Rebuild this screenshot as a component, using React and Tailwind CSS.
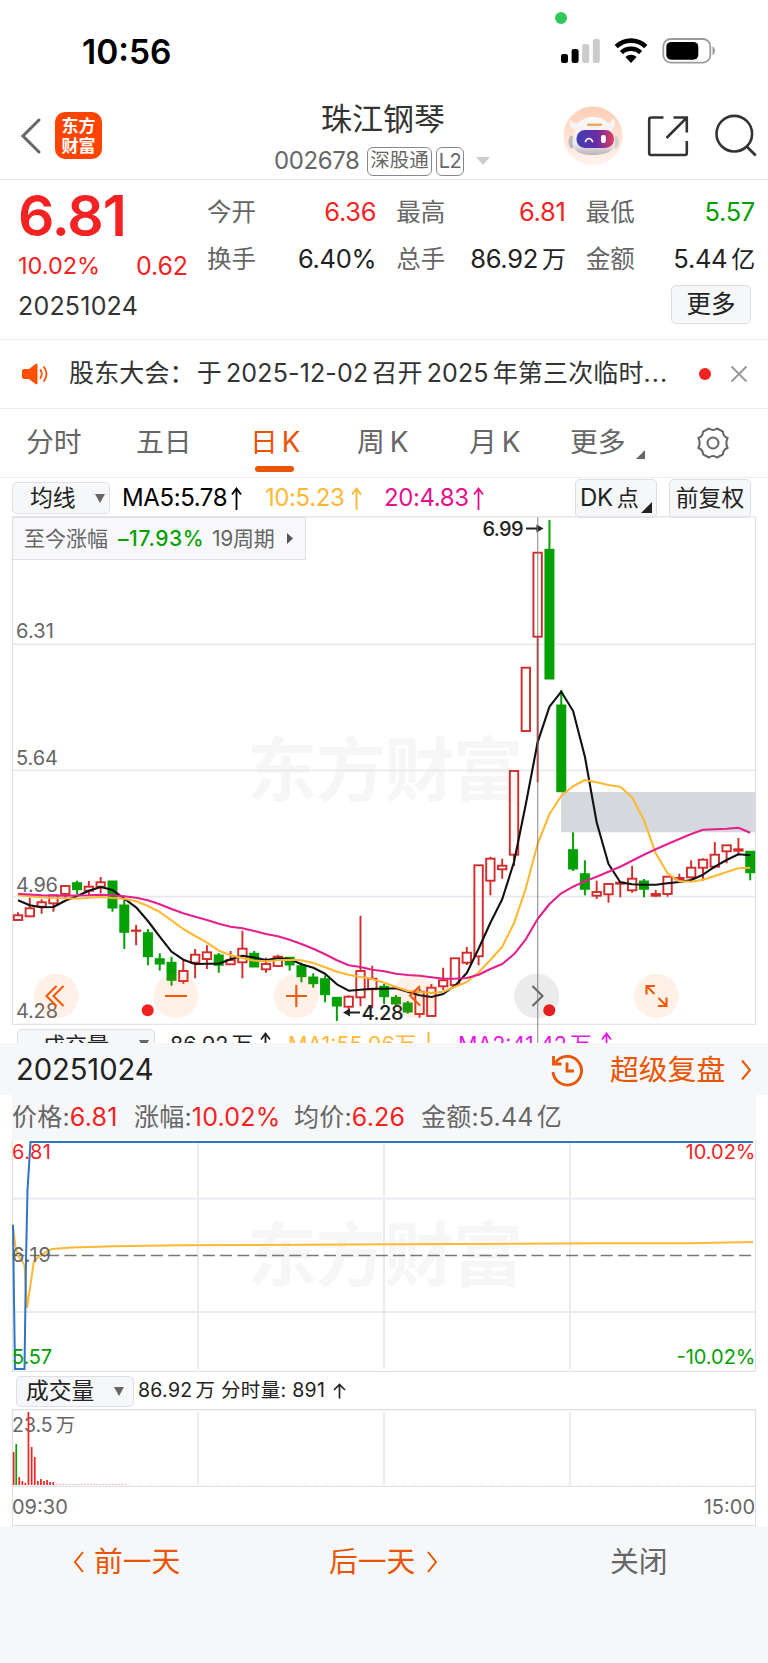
import React from "react";

const RED = "#f42222";
const GREEN = "#04a004";
const STEP = 11.81;

// [direction, body top, body bottom, high, low]
const CANDLES = [
  ["u", 915.3, 920, 912.3, 920.7], ["u", 908.3, 916.3, 897.7, 917.3], ["u", 902.3, 906.7, 899.3, 913.7],
  ["u", 895.3, 903.3, 895.3, 911.7], ["u", 886, 894, 885.3, 898], ["d", 882.7, 889.7, 880.7, 894.3],
  ["u", 886.7, 890.7, 881, 895.3], ["u", 882.3, 886.7, 877, 893.3], ["d", 881, 908, 881, 911.7],
  ["d", 905, 932.3, 899, 949], ["u", 930.5, 930.9, 925, 945.3], ["d", 932.7, 956.7, 929, 965.3],
  ["d", 958.7, 964, 953.3, 970.7], ["d", 962.3, 980.3, 956.7, 985.7], ["u", 971, 981, 960, 983.7],
  ["u", 954.7, 962.7, 949, 978.3], ["u", 952.3, 959, 945.3, 969], ["d", 955, 965.3, 953, 972.7],
  ["u", 960, 964.3, 951, 965], ["u", 948.7, 962.3, 930.7, 978.3], ["d", 953.3, 967, 951, 967],
  ["u", 964, 969.3, 957.7, 972.7], ["u", 956.7, 966, 954.7, 967], ["d", 957.3, 965, 957.3, 970.7],
  ["d", 965.7, 976.7, 962.7, 982.3], ["d", 977, 983.7, 973.3, 987.7], ["d", 978.7, 994.7, 975.3, 1002.3],
  ["d", 997.3, 1006, 997.3, 1021], ["u", 996.7, 1006.7, 995.3, 1010.3], ["u", 971, 997.3, 915.7, 1006.3],
  ["u", 978.7, 989.3, 965.7, 1008.3], ["d", 986.3, 996.7, 984, 1004], ["d", 997.3, 1004, 995, 1005.3],
  ["d", 1003, 1012, 1001, 1013.7], ["u", 991.7, 1014, 988.3, 1017.7], ["u", 987.7, 1016, 984, 1016],
  ["u", 980.3, 986.3, 967.7, 990], ["u", 958.3, 985, 958.3, 985], ["u", 952.7, 962.7, 947, 965],
  ["u", 865.3, 956.3, 865.3, 965.3], ["u", 858.7, 880.7, 856.7, 895.3], ["u", 865.7, 869.3, 858.7, 878.7],
  ["u", 771, 854.7, 771, 866], ["u", 667.7, 731, 667.7, 731], ["u", 552.7, 636.7, 552.7, 782.3],
  ["d", 549.3, 679, 520, 679], ["d", 705, 791.7, 690, 791.7], ["d", 849.7, 869, 832.3, 871],
  ["d", 873.7, 889.3, 860.3, 895.3], ["u", 892, 895.7, 880.7, 899], ["u", 884, 894.3, 884, 902.7],
  ["u", 882.7, 883.7, 881, 897.3], ["u", 878.7, 890.3, 865.7, 892.7], ["d", 881, 889.3, 879, 897.3],
  ["u", 894, 895.7, 890, 896.7], ["u", 876.7, 894, 876.7, 896.7], ["u", 878, 879.3, 873.7, 880],
  ["u", 867.7, 877.3, 860.3, 878.7], ["u", 859.7, 867.7, 858.3, 880.7], ["u", 854.7, 866.7, 842, 868.3],
  ["u", 845.3, 851.3, 845.3, 863.3], ["u", 849.3, 850.7, 838, 855.3], ["d", 851.3, 872.7, 851.3, 880.3],
];

const MA5 = [
  900.3, 905.3, 907.3, 907, 900.7, 896, 890.7, 887, 890, 898.7, 907.3, 921, 936.7, 951.7, 959.7, 964, 963.7,
  963.7, 959.3, 955.7, 957.5, 960, 958.3, 959, 964.3, 967.7, 973.7, 984.3, 990.7, 989.7, 988.7, 988.7, 988.3,
  991.7, 995.3, 997, 994, 985.7, 973, 948.7, 922.7, 899.3, 862, 804.3, 742.3, 706.7, 691.7, 711, 756.7, 822.5,
  864, 882.3, 884.3, 884.7, 884.7, 883.3, 882, 880, 874.7, 866.7, 860, 854.3, 855.3,
];
const MA10 = [
  895.3, 896.3, 897.3, 898, 898.3, 898.7, 897.7, 897, 898, 898.7, 901.3, 906, 912, 920.3, 929, 936, 942.7,
  950.7, 955.3, 958, 960.7, 961.3, 960.3, 959.7, 960.3, 963, 967.3, 971.7, 974.7, 977, 979, 982.7, 987, 991,
  992, 993, 991.7, 986.7, 982, 972.3, 960, 946.7, 923.3, 888.3, 844, 814, 795.7, 786.3, 780, 782.3, 785,
  786.7, 797.3, 820, 853.3, 873.3, 881.3, 881.7, 879.7, 876, 872, 868.3, 867.7,
];
const MA20 = [
  893.7, 894.5, 895.3, 895.5, 895.7, 895.5, 895.3, 894.7, 895.3, 896.3, 897.7, 900.3, 904.3, 909, 913.3,
  916.7, 920, 923.7, 926.7, 928.3, 931, 934, 936.3, 939.7, 944, 948.7, 954.3, 960.3, 965.3, 967, 969.7, 971.3,
  973.7, 975, 975.7, 977.3, 978.7, 978.7, 978, 974.7, 969, 964, 954.3, 939.3, 919, 904, 893.3, 886.7, 881.3,
  876.7, 871.7, 866.7, 860.7, 854.7, 849.3, 844, 839, 834, 829.7, 829.3, 828.7, 827.7, 832.7,
];

const VOLUMES = [
  [13.6, 33, RED], [16.2, 41, GREEN], [19.2, 8, RED], [22.3, 4, RED], [25.3, 2, RED], [28.4, 73, RED],
  [31.6, 38, RED], [34.7, 28, RED], [37.8, 4, RED], [40.8, 6, RED], [44, 4, RED], [47, 5, RED],
  [50.1, 3, RED], [53.2, 3, RED],
];

const toPoints = (list) => list.map((y, i) => `${(18 + i * STEP).toFixed(1)},${y}`).join(" ");

const StatusBar = () => (
  <div className="h-[96px] relative flex items-center justify-between pl-[82px] pr-[52px]">
    <span className="text-[33.500px] leading-[38px] font-semibold text-black mt-[7px]">10:56</span>
    <span className="absolute left-[555px] top-[12px] w-3 h-3 rounded-full bg-[#34c759]" />
    <svg width="156" height="28" viewBox="0 0 156 28" className="mt-[6px]">
      <rect x="1" y="17" width="7" height="9" rx="2.2" />
      <rect x="11.6" y="12" width="7" height="14" rx="2.2" />
      <rect x="22.2" y="7" width="7" height="19" rx="2.2" fill="#cbcbcb" />
      <rect x="32.8" y="2" width="7" height="24" rx="2.2" fill="#cbcbcb" />
      <g fill="none" stroke="#000" strokeWidth="4.6">
        <path d="M56.2 9.6a21.4 21.4 0 0 1 29.6 0" />
        <path d="M61.4 15.6a14 14 0 0 1 19.2 0" />
      </g>
      <path d="M65.4 20a8.3 8.3 0 0 1 11.2 0L71 26z" />
      <rect x="103.3" y="2" width="47" height="23.6" rx="7.5" fill="none" stroke="#9b9b9b" strokeWidth="1.8" />
      <rect x="106.3" y="4.9" width="32" height="17.800" rx="5" />
      <path d="M152.500 9.5c3.4 1.4 3.4 7.4 0 8.8z" fill="#9b9b9b" />
    </svg>
  </div>
);

const Robot = () => (
  <svg width="60" height="60" viewBox="0 0 60 60">
    <defs>
      <linearGradient id="halo" x1="0" y1="0" x2="0" y2="1">
        <stop offset="0" stopColor="#ffcdb5" />
        <stop offset="1" stopColor="#fff4ee" />
      </linearGradient>
      <linearGradient id="visor" x1="0" y1="0" x2="1" y2="0">
        <stop offset="0" stopColor="#3f3fb4" />
        <stop offset=".55" stopColor="#6a2ba6" />
        <stop offset="1" stopColor="#e0405a" />
      </linearGradient>
      <linearGradient id="shell" x1="0" y1="0" x2="0" y2="1">
        <stop offset="0" stopColor="#faf9f9" />
        <stop offset=".7" stopColor="#eeebec" />
        <stop offset="1" stopColor="#b9b2ba" />
      </linearGradient>
    </defs>
    <circle cx="30" cy="30" r="29.5" fill="url(#halo)" />
    <ellipse cx="8.500" cy="36" rx="3" ry="6.500" fill="#bdb8c2" />
    <ellipse cx="53" cy="36" rx="2.800" ry="6.500" fill="#d6cdd0" />
    <path d="M13 24C6.500 22 5.500 17 7.500 13.500c1.500 3.500 4.500 4.500 8.500 3.500C20 12 25 11 30.500 11c6 0 11 2 14 6 3.500 0 5-1.500 5.500-5 3 4 2.500 9-1.500 12 4.500 6 4.500 13 2 18-3 5-12 7-20.500 7-8 0-16-2-18.500-6C8.500 37 9 29 13 24z" fill="url(#shell)" />
    <rect x="24" y="17.500" width="15" height="2.600" rx="1" fill="#efa763" />
    <rect x="13.500" y="24" width="37.500" height="18" rx="8.500" fill="url(#visor)" />
    <path d="M22.500 35.500c1.500-4 5.500-4 7 0" fill="none" stroke="#fff" strokeWidth="1.700" strokeLinecap="round" />
    <rect x="38" y="29" width="4.800" height="8" rx="2" fill="#fff" />
  </svg>
);

const Header = () => (
  <header className="h-[84px] border-b border-[#e8e8e8] flex items-start">
    <svg width="22" height="38" viewBox="0 0 22 38" className="ml-[20px] mt-[21px]">
      <path d="M19 3 3 19l16 16" fill="none" stroke="#666" strokeWidth="3" strokeLinecap="round" />
    </svg>
    <div className="ml-[13px] mt-[16px] w-[47px] h-[47px] rounded-[10px] bg-[#ff4400] text-white font-bold text-[17px] leading-[20px] flex flex-col items-center justify-center">
      <span>东方</span>
      <span>财富</span>
    </div>
    <div className="w-[461px] pl-[172px]">
      <div className="ml-[47px] mt-[3px] text-[31px] leading-[40px] text-[#333]">珠江钢琴</div>
      <div className="flex items-center h-[30px] mt-[7px] text-[#666] whitespace-nowrap">
        <span className="w-[93px] text-[24px] tracking-[-0.4px]">002678</span>
        <span className="w-[65px] h-[29px] rounded-[6px] border-[1.5px] border-[#888] flex justify-center items-center text-[19.500px]">深股通</span>
        <span className="ml-[4px] w-[28px] h-[29px] rounded-[6px] border-[1.5px] border-[#888] flex justify-center items-center text-[20px] tracking-[-0.5px]">L2</span>
        <svg width="14" height="8" viewBox="0 0 14 8" className="ml-[12px]"><path d="M0 0h14L7 8z" fill="#ccc" /></svg>
      </div>
    </div>
    <div className="mt-[10px]"><Robot /></div>
    <svg width="43" height="44" viewBox="0 0 43 44" className="ml-[23px] mt-[18px]" fill="none" stroke="#333" strokeWidth="2.6">
      <path d="M17.500 3.500H5.200q-2 0-2 2V39q0 2 2 2h33.600q2 0 2-2V27" />
      <path d="M20.500 24 40.500 3.800M27.500 3.500h13.300v15" />
    </svg>
    <svg width="44" height="44" viewBox="0 0 44 44" className="ml-[25px] mt-[18px]" fill="none" stroke="#333" strokeWidth="2.6">
      <circle cx="20.300" cy="19.700" r="17.800" />
      <path d="m32.700 32.500 9 9" />
    </svg>
  </header>
);

const Quote = ({ label, value, unit, color = "text-[#222]" }) => (
  <div className="flex justify-between items-center h-[47px]">
    <span className="text-[24.500px] text-[#666]">{label}</span>
    <span className={`text-[25.500px] tracking-[-0.3px] ${color}`}>
      {value}
      {unit && <span className="ml-[4px] text-[24px]">{unit}</span>}
    </span>
  </div>
);

const Quotes = () => (
  <section className="h-[160px] border-b border-[#ededed] flex pl-[18px] pr-[13px] whitespace-nowrap">
    <div className="w-[170px] flex flex-col">
      <div className="mt-[8px] text-[57px] leading-[56px] h-[63px] font-semibold text-[#f42222] tracking-[-1px]">6.81</div>
      <div className="flex justify-between items-center h-[30px] text-[#f42222]">
        <span className="text-[23.500px]">10.02%</span>
        <span className="text-[25px] tracking-[-0.1px] mt-[2px]">0.62</span>
      </div>
      <div className="h-[40px] mt-[5px] leading-[40px] text-[25px] tracking-[0.2px] text-[#333]">20251024</div>
    </div>
    <div className="flex-1 ml-[19px] mt-[9px]">
      <div className="grid grid-cols-3 gap-x-[20px]">
        <Quote label="今开" value="6.36" color="text-[#f42222]" />
        <Quote label="最高" value="6.81" color="text-[#f42222]" />
        <Quote label="最低" value="5.57" color="text-[#04a004]" />
        <Quote label="换手" value="6.40%" />
        <Quote label="总手" value="86.92" unit="万" />
        <Quote label="金额" value="5.44" unit="亿" />
      </div>
      <button className="ml-auto mr-[4px] mt-[2px] w-[80px] h-[39px] rounded-[5px] border-[1.500px] border-[#dcdfe5] bg-[#f6f7f9] text-[24.500px] text-[#222] flex items-center justify-center">更多</button>
    </div>
  </section>
);

const Notice = () => (
  <section className="h-[69px] border-b border-[#ededed] flex items-center whitespace-nowrap">
    <svg width="28" height="22" viewBox="0 0 28 22" className="ml-[22px]">
      <path d="M2 6h5l6.500-5q2-1 2 1v18q0 2-2 1L7 16H2q-2 0-2-2V8q0-2 2-2z" fill="#ff5000" />
      <path d="M18.500 7q2.500 4 0 8M22 4q5 7 0 14" fill="none" stroke="#ff5000" strokeWidth="1.800" strokeLinecap="round" />
    </svg>
    <span className="ml-[19px] w-[628px] text-[25px] tracking-[0.15px] text-[#333]">股东大会：<span className="ml-[2px]">于</span><span className="mx-[4px]">2025-12-02</span>召开<span className="mx-[4px]">2025</span>年第三次临时<span className="tracking-[1px]">...</span></span>
    <span className="w-3 h-3 rounded-full bg-[#f42222] ml-[2px]" />
    <svg width="18" height="18" viewBox="0 0 18 18" className="ml-[19px]">
      <path d="M1.500 1.500l15 15M16.500 1.500l-15 15" stroke="#999" strokeWidth="2" />
    </svg>
  </section>
);

const Tabs = () => (
  <nav className="h-[69px] border-b border-[#ededed] flex items-center text-[27.800px] text-[#666] whitespace-nowrap">
    <span className="ml-[26px] w-[110px]">分时</span>
    <span className="w-[114px]">五日</span>
    <span className="w-[107px] h-full flex flex-col items-start text-[#ea5504]">
      <span className="h-[46px] mt-[11px] flex items-center">日<span className="ml-[4px]">K</span></span>
      <span className="ml-[5px] w-[39px] h-[6px] rounded-full bg-[#ea5504]" />
    </span>
    <span className="w-[112px]">周<span className="ml-[5px]">K</span></span>
    <span className="w-[101px]">月<span className="ml-[5px]">K</span></span>
    <span className="w-[66px]">更多</span>
    <svg width="9" height="9" viewBox="0 0 9 9" className="mt-[22px]"><path d="M9 0v9H0z" fill="#666" /></svg>
    <svg width="34" height="34" viewBox="0 0 34 34" className="ml-[51px]" fill="none" stroke="#666" strokeWidth="2">
      <path d="M13 2.500q4 3 8 0l6 3.200q0 4.800 4.700 6.300Q29 17 31.700 22q-4.700 1.500-4.700 6.300l-6 3.200q-4-3-8 0l-6-3.200Q7 23.500 2.300 22 5 17 2.300 12 7 10.500 7 5.700z" strokeLinejoin="round" />
      <circle cx="17" cy="17" r="5.500" />
    </svg>
  </nav>
);

const Caret = ({ className = "" }) => (
  <svg width="10" height="9" viewBox="0 0 10 9" className={className}><path d="M0 0h10L5 9z" fill="#666" /></svg>
);

const Arrow = ({ down, className = "" }) => (
  <svg width="11" height="23" viewBox="0 0 11 23" className={className} fill="none" stroke="currentColor" strokeWidth="1.800">
    <path d={down ? "M5.500 0v22M1 16l4.500 6 4.500-6" : "M5.500 23V1.500M1 7.500l4.500-6 4.500 6"} />
  </svg>
);

const AverageBar = () => (
  <div className="h-[38px] pt-[2px] flex items-center text-[24px] tracking-[-0.4px] whitespace-nowrap">
    <div className="ml-[12px] w-[98px] h-[32px] rounded-[5px] border-[1.500px] border-[#dcdfe5] bg-[#f6f7f9] flex items-center text-[22.800px] text-[#222] tracking-normal">
      <span className="ml-[17px] w-[65px]">均线</span>
      <Caret />
    </div>
    <div className="ml-[12px] w-[143px] flex items-center text-black">MA5:5.78<Arrow className="ml-[4px]" /></div>
    <div className="w-[119px] flex items-center text-[#ffb833]">10:5.23<Arrow className="ml-[7px]" /></div>
    <div className="w-[191px] flex items-center text-[#e4108c]">20:4.83<Arrow className="ml-[4px]" /></div>
    <div className="w-[82px] h-[39px] rounded-[5px] border-[1.500px] border-[#dcdfe5] bg-[#f6f7f9] flex items-center text-[#222]">
      <span className="ml-[4px]">DK</span>
      <span className="ml-[4px] text-[22px]">点</span>
      <svg width="11" height="11" viewBox="0 0 11 11" className="ml-[3px] mt-[19px]"><path d="M11 0v11H0z" fill="#222" /></svg>
    </div>
    <div className="ml-[12px] w-[82px] h-[39px] rounded-[5px] border-[1.500px] border-[#dcdfe5] bg-[#f6f7f9] flex items-center justify-center text-[22.800px] tracking-normal text-[#222]">前复权</div>
  </div>
);

const RoundButton = ({ cx, gray, children }) => (
  <g>
    <circle cx={cx} cy="996" r="22.500" fill={gray ? "#000" : "#ff6a20"} fillOpacity={gray ? 0.08 : 0.1} />
    <g fill="none" stroke={gray ? "#666" : "#f0590a"} strokeWidth="2.100">{children}</g>
  </g>
);

const KLineChart = () => (
  <div className="relative h-[527px]">
    <svg width="768" height="527" viewBox="0 516 768 527" className="block">
      <text x="247" y="796" fontSize="70" fontWeight="700" fill="#f6f6f6" textLength="276">东方财富</text>
      <g stroke="#e6e9ef" strokeWidth="1.800">
        <path d="M12.500 644.300h743M12.500 770.300h743M12.500 896.700h743" />
        <rect x="12.500" y="516.800" width="743" height="507.500" fill="none" stroke="#e0e2e6" strokeWidth="1.200" />
      </g>
      <rect x="561" y="792" width="194.500" height="40.300" fill="#d5d8dd" />
      <g fontSize="20" fill="#666">
        <text x="16" y="638" textLength="38">6.31</text>
        <text x="16" y="764.500" textLength="42">5.64</text>
        <text x="16" y="891.500" textLength="42">4.96</text>
        <text x="16" y="1018" textLength="42">4.28</text>
      </g>
      {CANDLES.map(([dir, top, bottom, high, low], i) => {
        const x = 18 + i * STEP;
        if (dir === "d") {
          return (
            <g key={i} fill={GREEN}>
              <rect x={x - 1} y={high} width="2" height={low - high} />
              <rect x={x - 5} y={top - 0.5} width="10" height={bottom - top + 1} />
            </g>
          );
        }
        return (
          <g key={i} fill="none" stroke="#d32a2a" strokeWidth="1.900">
            <path d={`M${x} ${high}V${top}M${x} ${bottom}V${low}`} />
            <rect x={x - 4.2} y={top} width="8.400" height={bottom - top} />
          </g>
        );
      })}
      <g fill="none" strokeWidth="2.100" strokeLinejoin="round">
        <polyline points={toPoints(MA5)} stroke="#111" />
        <polyline points={toPoints(MA10)} stroke="#ffb833" />
        <polyline points={toPoints(MA20)} stroke="#e4208f" />
      </g>

      {/* Extremes */}
      <g fontSize="20" fill="#222" fontWeight="500">
        <text x="482.500" y="536" textLength="41">6.99</text>
        <text x="361.500" y="1020" textLength="42">4.28</text>
      </g>
      <g stroke="#222" strokeWidth="1.800" fill="#222">
        <path d="M526 528.500h11M360 1012.500h-11" />
        <path d="M536.500 524.500l7 4-7 4zM350 1008.500l-7 4 7 4z" stroke="none" />
      </g>

      <RoundButton cx="56.300">
        <path d="M56.500 986 46.500 996l10 10M63.500 986l-10 10 10 10" />
      </RoundButton>
      <RoundButton cx="176"><path d="M165 996h22" /></RoundButton>
      <RoundButton cx="296.300"><path d="M286 996h21M296.300 985v22" /></RoundButton>
      <RoundButton cx="415"><path d="M420 986l-10 9.500 10 10" /></RoundButton>
      <RoundButton cx="536.700" gray><path d="M532.500 986l10 10-10 10" /></RoundButton>
      <RoundButton cx="656.300">
        <path d="M655 986h-8.500v8.500M646.500 986l8 8M658 1006h8.500v-8.500M666.500 1006l-8-8" />
      </RoundButton>
      <circle cx="147.700" cy="1010.300" r="6" fill={RED} />
      <circle cx="549.300" cy="1010.300" r="6" fill="#e52020" />
      <path d="M537.700 517v526" stroke="#777" strokeOpacity=".75" strokeWidth="1.200" />
    </svg>

    {/* Gain badge */}
    <div className="absolute left-[12px] top-[1px] w-[294px] h-[43px] border-[1.500px] border-[#dcdfe5] bg-[#f8f8fb] flex items-center text-[21px] text-[#666] whitespace-nowrap">
      <span className="ml-[11px] w-[94px]">至今涨幅</span>
      <span className="w-[94px] text-[#04a004] font-medium text-[21px] tracking-[0.6px]">–17.93%</span>
      <span className="w-[73px] tracking-[-0.3px]">19周期</span>
      <svg width="6" height="11" viewBox="0 0 6 11" className="ml-[2px]"><path d="M0 0v11l6-5.500z" fill="#555" /></svg>
    </div>

    {/* Volume legend, cut off by the panel below */}
    <div className="absolute left-0 right-0 bottom-0 h-[17px] overflow-hidden">
      <div className="flex items-start h-[40px] pt-[3px] text-[21.500px] leading-[26px] whitespace-nowrap">
        <div className="ml-[17px] w-[138px] h-[32px] rounded-[5px] border-[1.500px] border-[#dcdfe5] bg-[#f6f7f9] flex text-[#222] text-[22px]">
          <span className="ml-[25px] w-[96px] mt-[2px]">成交量</span>
          <Caret className="mt-[10px]" />
        </div>
        <div className="ml-[15px] w-[118px] flex text-[#222]"><span className="mt-[2px]">86.92<span className="ml-[3px]">万</span></span><Arrow className="ml-[7px] mt-[3px]" /></div>
        <div className="w-[170px] flex text-[#ffb833]"><span className="mt-[2px]">MA1:55.96万</span><Arrow down className="ml-[7px] mt-[3px]" /></div>
        <div className="flex text-[#e815e8]"><span className="mt-[2px]">MA2:41.42<span className="ml-[3px]">万</span></span><Arrow className="ml-[9px] mt-[3px]" /></div>
      </div>
    </div>
  </div>
);

const DayHeader = () => (
  <>
    <div className="h-[52px] pt-px bg-[#f6f7f9] flex items-center whitespace-nowrap">
      <span className="ml-[16px] w-[533px] text-[29.200px] tracking-[-0.1px] text-[#222]">20251024</span>
      <svg width="36" height="36" viewBox="0 0 36 36" fill="none" stroke="#ea5504" strokeWidth="2.800">
        <path d="M6.500 10.500A14.300 14.300 0 1 1 4 20" />
        <path d="M4.500 4v8h8" />
        <path d="M18 10.500V19h7" />
      </svg>
      <span className="ml-[25px] w-[130px] text-[28.800px] text-[#ea5504]">超级复盘</span>
      <svg width="12" height="22" viewBox="0 0 12 22"><path d="M2 1.500 10 11 2 20.500" fill="none" stroke="#ea5504" strokeWidth="2" /></svg>
    </div>
    <div className="h-[45px] pt-px mx-[12px] bg-[#f6f7f9] flex items-center text-[25px] text-[#666] whitespace-nowrap tracking-[0.2px]">
      <span className="w-[122px]">价格:<span className="text-[#f42222]">6.81</span></span>
      <span className="w-[160px]">涨幅:<span className="text-[#f42222]">10.02%</span></span>
      <span className="w-[127px]">均价:<span className="text-[#f42222]">6.26</span></span>
      <span>金额:5.44<span className="ml-[3px]">亿</span></span>
    </div>
  </>
);

const IntradayChart = () => (
  <svg width="768" height="232" viewBox="0 1140 768 232" className="block">
    <text x="247" y="1281" fontSize="70" fontWeight="700" fill="#f6f6f6" textLength="276">东方财富</text>
    <g stroke="#e6e9ef" strokeWidth="1.800" fill="none">
      <path d="M12.500 1198.700h743M12.500 1312h743M198 1142v227M384 1142v227M570 1142v227" />
      <path d="M12.500 1140v231.300h743V1140" stroke="#e0e2e6" strokeWidth="1.200" />
    </g>
    <path d="M12.500 1255.500H755" stroke="#777" strokeWidth="1.400" strokeDasharray="12 5.300" />
    <polyline
      points="12.700,1224 15.500,1247 19,1257 24.500,1265 27,1308 31,1281 34,1261 40,1256 46,1252 52,1249 72,1247.500 115,1246.300 180,1245.300 400,1244.300 600,1243.300 690,1243.300 753,1242"
      fill="none" stroke="#ffb833" strokeWidth="2"
    />
    <polyline
      points="13,1225 14,1300 15,1369 24.500,1369 26,1260 27.500,1190 30.500,1142 753,1142"
      fill="none" stroke="#2f74c8" strokeWidth="2"
    />
    <g fontSize="20">
      <text x="12" y="1159" fill={RED} textLength="39">6.81</text>
      <text x="755.500" y="1159" fill={RED} textAnchor="end" textLength="70">10.02%</text>
      <text x="12" y="1261.500" fill="#666" textLength="39">6.19</text>
      <text x="12" y="1364" fill={GREEN} textLength="40">5.57</text>
      <text x="755.500" y="1364" fill={GREEN} textAnchor="end" textLength="79">-10.02%</text>
    </g>
  </svg>
);

const VolumeChart = () => (
  <>
    <div className="h-[37px] pt-px flex items-center text-[19.500px] text-[#222] whitespace-nowrap">
      <div className="ml-[16px] w-[118px] h-[31px] rounded-[5px] border-[1.500px] border-[#dcdfe5] bg-[#f6f7f9] flex items-center text-[22.800px]">
        <span className="ml-[9px] w-[88px]">成交量</span>
        <Caret />
      </div>
      <span className="ml-[4px] tracking-[0.3px]">86.92<span className="ml-[3px]">万</span> 分时量: 891</span>
      <svg width="13" height="16" viewBox="0 0 13 16" className="ml-[8px]" fill="none" stroke="#222" strokeWidth="1.700">
        <path d="M6.500 15.500V1.500M1 7l5.500-5.500L12 7" />
      </svg>
    </div>
    <svg width="768" height="78" viewBox="0 1409 768 78" className="block">
      <g stroke="#e6e9ef" strokeWidth="1.800" fill="none">
        <path d="M198 1412v73M384 1412v73M570 1412v73" />
        <rect x="12.500" y="1409.700" width="743" height="76.800" stroke="#dcdfe3" strokeWidth="1.300" />
      </g>
      <text x="12" y="1432" fontSize="19.500" fill="#666">23.5<tspan dx="3">万</tspan></text>
      {VOLUMES.map(([x, h, color]) => (
        <rect key={x} x={x - 0.8} y={1485 - h} width="1.700" height={h} fill={color} />
      ))}
      <path d="M56 1484.500h70" stroke={RED} strokeOpacity=".35" strokeDasharray="1.800 1.300" />
      <path d="M128 1484.600h626" stroke={RED} strokeOpacity=".1" strokeDasharray="2 9" />
    </svg>
    <div className="h-[39px] mx-[12px] border-x border-b-[1.500px] border-[#dcdfe3] flex items-center justify-between text-[20px] text-[#666]">
      <span className="mt-[2px] -ml-px">09:30</span>
      <span className="mt-[2px]">15:00</span>
    </div>
  </>
);

const Footer = () => (
  <footer className="h-[137px] bg-[#f6f7f9] flex items-start pt-[16px] text-[28.800px] leading-[40px] text-[#ea5504] whitespace-nowrap">
    <div className="ml-[73px] w-[256px] flex items-center">
      <svg width="12" height="22" viewBox="0 0 12 22" className="mr-[9px]"><path d="M10 1 2 11l8 10" fill="none" stroke="#ea5504" strokeWidth="2" /></svg>
      前一天
    </div>
    <div className="w-[281px] flex items-center">
      后一天
      <svg width="12" height="22" viewBox="0 0 12 22" className="ml-[11px]"><path d="M2 1 10 11 2 21" fill="none" stroke="#ea5504" strokeWidth="2" /></svg>
    </div>
    <div className="text-[#666]">关闭</div>
  </footer>
);

export default function App() {
  return (
    <main className="w-[768px] h-[1663px] overflow-hidden bg-white font-[Inter,'Noto_Sans_CJK_SC',sans-serif]">
      <StatusBar />
      <Header />
      <Quotes />
      <Notice />
      <Tabs />
      <AverageBar />
      <KLineChart />
      <DayHeader />
      <IntradayChart />
      <VolumeChart />
      <Footer />
    </main>
  );
}
